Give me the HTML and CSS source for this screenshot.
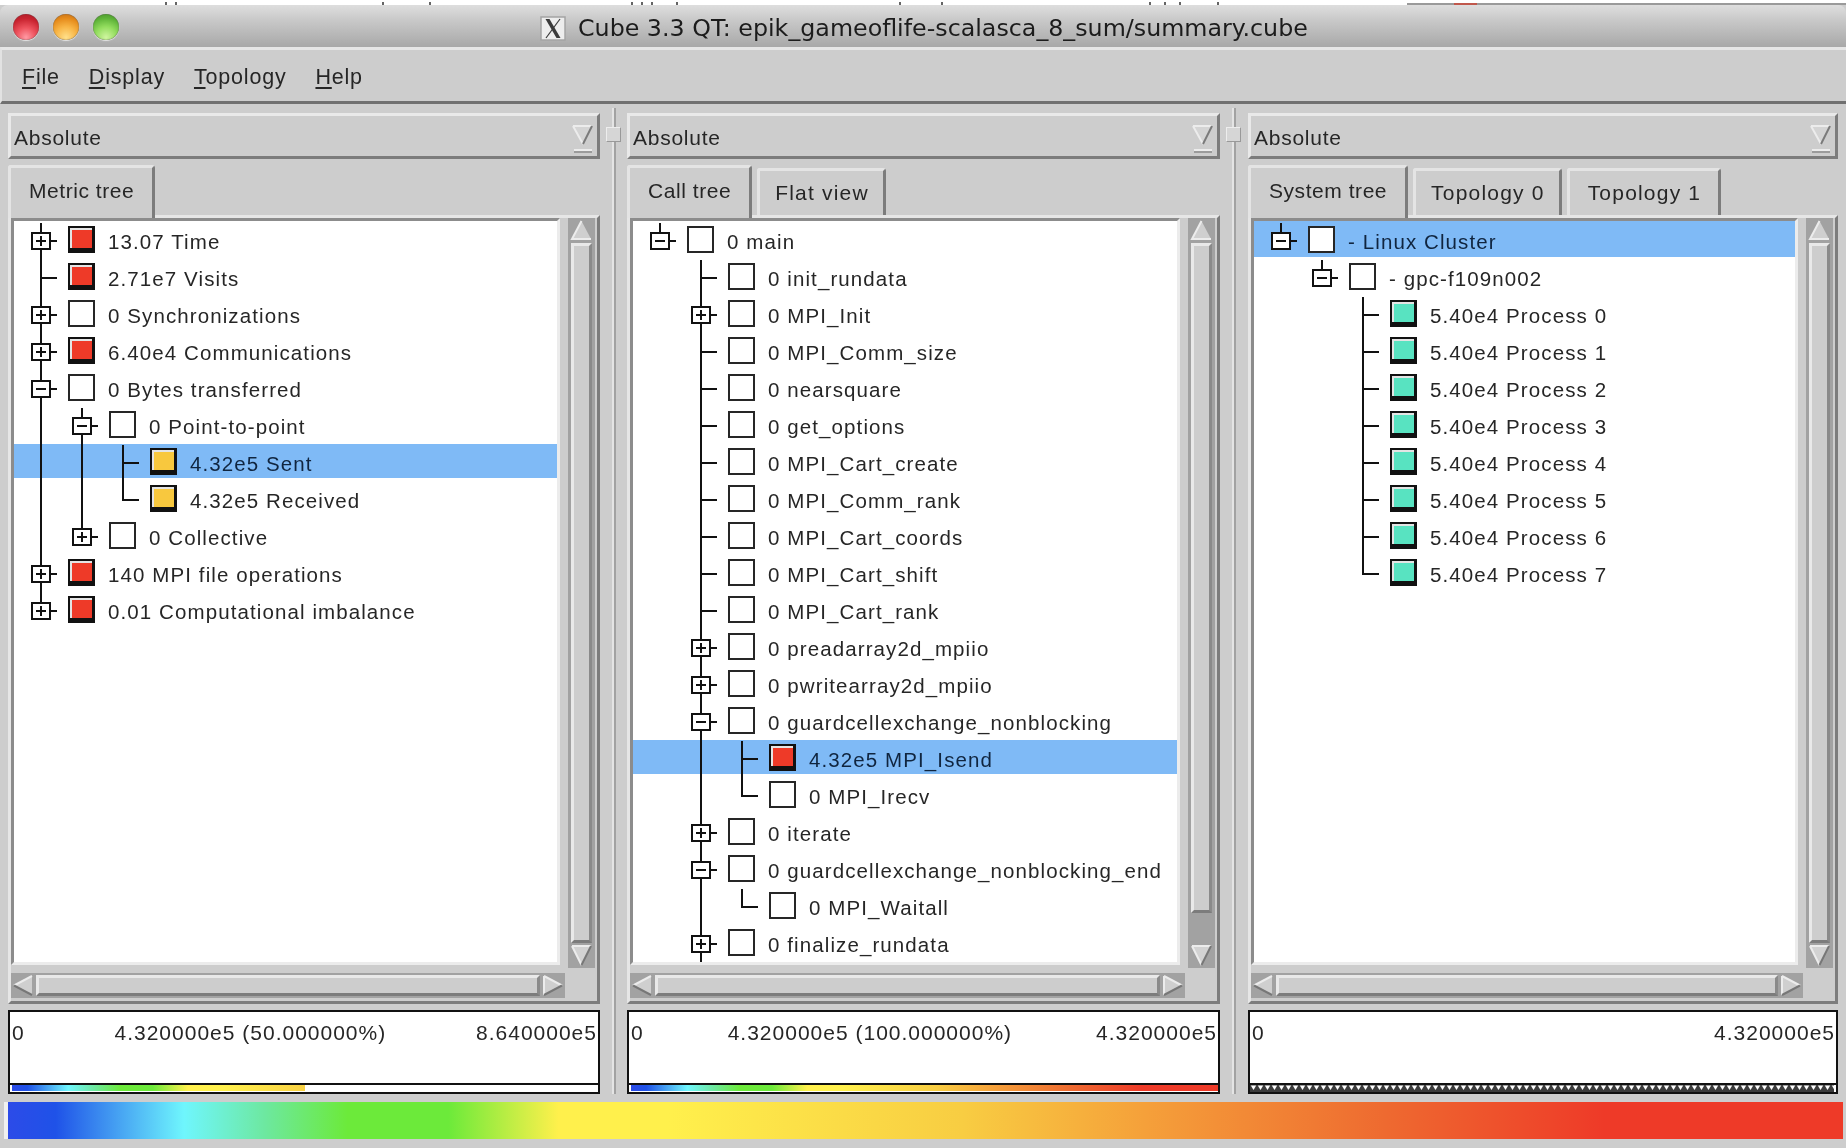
FILE: index.html
```html
<!DOCTYPE html>
<html lang="en">
<head>
<meta charset="utf-8">
<title>Cube 3.3 QT</title>
<link rel="stylesheet" href="styles.css">
</head>
<body>
<svg width="0" height="0" class="defs">
  <defs>
    <pattern id="zig" width="7" height="7" patternUnits="userSpaceOnUse">
      <rect width="7" height="7" fill="#3c3c3c"/>
      <path d="M0.8 0.5 H6.2 L3.5 5 Z" fill="#fff"/>
    </pattern>
    <symbol id="a-up" viewBox="0 0 27 25"><rect width="27" height="25" fill="#a2a2a2"/><path d="M13.5 3 L23 21 H4 Z" fill="#cfcfcf"/><path d="M13.5 3 L4 21 H23" fill="none" stroke="#ececec" stroke-width="2"/></symbol>
    <symbol id="a-down" viewBox="0 0 27 25"><rect width="27" height="25" fill="#a2a2a2"/><path d="M4 3 H23 L13.5 22 Z" fill="#d2d2d2"/><path d="M4 3 H23 M4 3 L13.5 22" fill="none" stroke="#ececec" stroke-width="2"/><path d="M23 3 L13.5 22" fill="none" stroke="#777" stroke-width="2"/></symbol>
    <symbol id="a-left" viewBox="0 0 25 25"><rect width="25" height="25" fill="#a2a2a2"/><path d="M3 12.5 L21 3 V22 Z" fill="#cfcfcf"/><path d="M3 12.5 L21 3" fill="none" stroke="#ececec" stroke-width="2"/><path d="M3 12.5 L21 22" fill="none" stroke="#777" stroke-width="2"/></symbol>
    <symbol id="a-right" viewBox="0 0 25 25"><rect width="25" height="25" fill="#a2a2a2"/><path d="M22 12.5 L4 3 V22 Z" fill="#cfcfcf"/><path d="M22 12.5 L4 3 M4 3 V22" fill="none" stroke="#ececec" stroke-width="2"/><path d="M22 12.5 L4 22" fill="none" stroke="#777" stroke-width="2"/></symbol>
    <symbol id="a-combo" viewBox="0 0 22 28"><path d="M1 1 H20 L11 19 Z" fill="#d4d4d4"/><path d="M1 1 H20 M1 1 L11 19" fill="none" stroke="#ececec" stroke-width="2"/><path d="M20 1 L11 19" fill="none" stroke="#7a7a7a" stroke-width="2"/><path d="M2 25 H20" stroke="#ececec" stroke-width="2"/><path d="M2 27 H20" stroke="#8a8a8a" stroke-width="1.5"/></symbol>
  </defs>
</svg>
<div class="window">
  <svg class="strip" width="1846" height="5" viewBox="0 0 1846 5">
    <path d="M166 2V5M176 2V5M383 2V5M430 2V5M632 2V5M642 2V5M652 2V5M677 2V5M900 2V5M942 2V5M1150 2V5M1165 2V5M1180 2V5M1218 2V5" stroke="#333" stroke-width="1.5"/>
    <rect x="1407" y="3" width="439" height="2" fill="#9a9a9a"/>
    <rect x="1454" y="3" width="23" height="2" fill="#c0584c"/>
  </svg>
  <header class="titlebar">
    <div class="lights">
      <span class="light red"></span>
      <span class="light amber"></span>
      <span class="light green"></span>
    </div>
    <div class="title">
      <svg class="xlogo" width="26" height="25" viewBox="0 0 26 25">
        <rect x="1" y="1" width="24" height="23" fill="#ededed" stroke="#a4a4a4" stroke-width="1.5"/>
        <path d="M5.5 3 H9.5 L20.5 22 H16.5 Z" fill="#3a3a3a"/>
        <path d="M20 3 L6 22" stroke="#3a3a3a" stroke-width="1.2" fill="none"/>
      </svg>
      <span>Cube 3.3 QT: epik_gameoflife-scalasca_8_sum/summary.cube</span>
    </div>
  </header>
  <nav class="menubar">
    <span><u>F</u>ile</span>
    <span><u>D</u>isplay</span>
    <span><u>T</u>opology</span>
    <span><u>H</u>elp</span>
  </nav>
  <main class="panes">
    <section class="pane pane-left">
      <div class="combo"><span>Absolute</span><svg class="combo-arrow" width="22" height="28"><use href="#a-combo"/></svg></div>
      <div class="tabs"><span class="tab active">Metric tree</span></div>
      <div class="frame">
        <div class="frame-top">
          <div class="tree">
            <div class="row"><i class="g t"><b class="box plus"></b></i><span class="sw red"></span><span class="lb">13.07 Time</span></div>
            <div class="row"><i class="g t"></i><span class="sw red"></span><span class="lb">2.71e7 Visits</span></div>
            <div class="row"><i class="g t"><b class="box plus"></b></i><span class="sw"></span><span class="lb">0 Synchronizations</span></div>
            <div class="row"><i class="g t"><b class="box plus"></b></i><span class="sw red"></span><span class="lb">6.40e4 Communications</span></div>
            <div class="row"><i class="g t"><b class="box"></b></i><span class="sw"></span><span class="lb">0 Bytes transferred</span></div>
            <div class="row"><i class="g v"></i><i class="g t"><b class="box"></b></i><span class="sw"></span><span class="lb">0 Point-to-point</span></div>
            <div class="row sel"><i class="g v"></i><i class="g v"></i><i class="g t"></i><span class="sw yellow"></span><span class="lb">4.32e5 Sent</span></div>
            <div class="row"><i class="g v"></i><i class="g v"></i><i class="g l"></i><span class="sw yellow"></span><span class="lb">4.32e5 Received</span></div>
            <div class="row"><i class="g v"></i><i class="g l"><b class="box plus"></b></i><span class="sw"></span><span class="lb">0 Collective</span></div>
            <div class="row"><i class="g t"><b class="box plus"></b></i><span class="sw red"></span><span class="lb">140 MPI file operations</span></div>
            <div class="row"><i class="g l"><b class="box plus"></b></i><span class="sw red"></span><span class="lb">0.01 Computational imbalance</span></div>
          </div>
          <div class="vscroll">
            <svg class="arrow" width="27" height="25"><use href="#a-up"/></svg>
            <div class="slider"></div>
            <svg class="arrow" width="27" height="25"><use href="#a-down"/></svg>
          </div>
        </div>
        <div class="frame-bottom">
          <div class="hscroll">
            <svg width="25" height="25"><use href="#a-left"/></svg>
            <div class="hslider"></div>
            <svg width="25" height="25"><use href="#a-right"/></svg>
          </div>
        </div>
      </div>
      <div class="legend">
        <div class="legend-text"><span>0</span><span>4.320000e5 (50.000000%)</span><span>8.640000e5</span></div>
        <div class="legend-bar"><div class="fill half"></div></div>
      </div>
    </section>
    <div class="split"><span class="grip"></span></div>
    <section class="pane pane-mid">
      <div class="combo"><span>Absolute</span><svg class="combo-arrow" width="22" height="28"><use href="#a-combo"/></svg></div>
      <div class="tabs"><span class="tab active">Call tree</span><span class="tab">Flat view</span></div>
      <div class="frame">
        <div class="frame-top">
          <div class="tree">
            <div class="row"><i class="g l"><b class="box"></b></i><span class="sw"></span><span class="lb">0 main</span></div>
            <div class="row"><i class="g"></i><i class="g t"></i><span class="sw"></span><span class="lb">0 init_rundata</span></div>
            <div class="row"><i class="g"></i><i class="g t"><b class="box plus"></b></i><span class="sw"></span><span class="lb">0 MPI_Init</span></div>
            <div class="row"><i class="g"></i><i class="g t"></i><span class="sw"></span><span class="lb">0 MPI_Comm_size</span></div>
            <div class="row"><i class="g"></i><i class="g t"></i><span class="sw"></span><span class="lb">0 nearsquare</span></div>
            <div class="row"><i class="g"></i><i class="g t"></i><span class="sw"></span><span class="lb">0 get_options</span></div>
            <div class="row"><i class="g"></i><i class="g t"></i><span class="sw"></span><span class="lb">0 MPI_Cart_create</span></div>
            <div class="row"><i class="g"></i><i class="g t"></i><span class="sw"></span><span class="lb">0 MPI_Comm_rank</span></div>
            <div class="row"><i class="g"></i><i class="g t"></i><span class="sw"></span><span class="lb">0 MPI_Cart_coords</span></div>
            <div class="row"><i class="g"></i><i class="g t"></i><span class="sw"></span><span class="lb">0 MPI_Cart_shift</span></div>
            <div class="row"><i class="g"></i><i class="g t"></i><span class="sw"></span><span class="lb">0 MPI_Cart_rank</span></div>
            <div class="row"><i class="g"></i><i class="g t"><b class="box plus"></b></i><span class="sw"></span><span class="lb">0 preadarray2d_mpiio</span></div>
            <div class="row"><i class="g"></i><i class="g t"><b class="box plus"></b></i><span class="sw"></span><span class="lb">0 pwritearray2d_mpiio</span></div>
            <div class="row"><i class="g"></i><i class="g t"><b class="box"></b></i><span class="sw"></span><span class="lb">0 guardcellexchange_nonblocking</span></div>
            <div class="row sel"><i class="g"></i><i class="g v"></i><i class="g t"></i><span class="sw red"></span><span class="lb">4.32e5 MPI_Isend</span></div>
            <div class="row"><i class="g"></i><i class="g v"></i><i class="g l"></i><span class="sw"></span><span class="lb">0 MPI_Irecv</span></div>
            <div class="row"><i class="g"></i><i class="g t"><b class="box plus"></b></i><span class="sw"></span><span class="lb">0 iterate</span></div>
            <div class="row"><i class="g"></i><i class="g t"><b class="box"></b></i><span class="sw"></span><span class="lb">0 guardcellexchange_nonblocking_end</span></div>
            <div class="row"><i class="g"></i><i class="g v"></i><i class="g l"></i><span class="sw"></span><span class="lb">0 MPI_Waitall</span></div>
            <div class="row"><i class="g"></i><i class="g t"><b class="box plus"></b></i><span class="sw"></span><span class="lb">0 finalize_rundata</span></div>
          </div>
          <div class="vscroll">
            <svg class="arrow" width="27" height="25"><use href="#a-up"/></svg>
            <div class="slider"></div>
            <div class="trough"></div>
            <svg class="arrow" width="27" height="25"><use href="#a-down"/></svg>
          </div>
        </div>
        <div class="frame-bottom">
          <div class="hscroll">
            <svg width="25" height="25"><use href="#a-left"/></svg>
            <div class="hslider"></div>
            <svg width="25" height="25"><use href="#a-right"/></svg>
          </div>
        </div>
      </div>
      <div class="legend">
        <div class="legend-text"><span>0</span><span>4.320000e5 (100.000000%)</span><span>4.320000e5</span></div>
        <div class="legend-bar"><div class="fill"></div></div>
      </div>
    </section>
    <div class="split"><span class="grip"></span></div>
    <section class="pane pane-right">
      <div class="combo"><span>Absolute</span><svg class="combo-arrow" width="22" height="28"><use href="#a-combo"/></svg></div>
      <div class="tabs"><span class="tab active">System tree</span><span class="tab">Topology 0</span><span class="tab">Topology 1</span></div>
      <div class="frame">
        <div class="frame-top">
          <div class="tree">
            <div class="row sel"><i class="g l"><b class="box"></b></i><span class="sw"></span><span class="lb">- Linux Cluster</span></div>
            <div class="row"><i class="g"></i><i class="g l"><b class="box"></b></i><span class="sw"></span><span class="lb">- gpc-f109n002</span></div>
            <div class="row"><i class="g"></i><i class="g"></i><i class="g t"></i><span class="sw teal"></span><span class="lb">5.40e4 Process 0</span></div>
            <div class="row"><i class="g"></i><i class="g"></i><i class="g t"></i><span class="sw teal"></span><span class="lb">5.40e4 Process 1</span></div>
            <div class="row"><i class="g"></i><i class="g"></i><i class="g t"></i><span class="sw teal"></span><span class="lb">5.40e4 Process 2</span></div>
            <div class="row"><i class="g"></i><i class="g"></i><i class="g t"></i><span class="sw teal"></span><span class="lb">5.40e4 Process 3</span></div>
            <div class="row"><i class="g"></i><i class="g"></i><i class="g t"></i><span class="sw teal"></span><span class="lb">5.40e4 Process 4</span></div>
            <div class="row"><i class="g"></i><i class="g"></i><i class="g t"></i><span class="sw teal"></span><span class="lb">5.40e4 Process 5</span></div>
            <div class="row"><i class="g"></i><i class="g"></i><i class="g t"></i><span class="sw teal"></span><span class="lb">5.40e4 Process 6</span></div>
            <div class="row"><i class="g"></i><i class="g"></i><i class="g l"></i><span class="sw teal"></span><span class="lb">5.40e4 Process 7</span></div>
          </div>
          <div class="vscroll">
            <svg class="arrow" width="27" height="25"><use href="#a-up"/></svg>
            <div class="slider"></div>
            <svg class="arrow" width="27" height="25"><use href="#a-down"/></svg>
          </div>
        </div>
        <div class="frame-bottom">
          <div class="hscroll">
            <svg width="25" height="25"><use href="#a-left"/></svg>
            <div class="hslider"></div>
            <svg width="25" height="25"><use href="#a-right"/></svg>
          </div>
        </div>
      </div>
      <div class="legend">
        <div class="legend-text"><span>0</span><span>4.320000e5</span></div>
        <div class="legend-bar"><svg class="zigzag" width="100%" height="100%"><rect width="100%" height="100%" fill="url(#zig)"/></svg></div>
      </div>
    </section>
  </main>
  <div class="scale"></div>
</div>
</body>
</html>
```
FILE: styles.css
```css
* { box-sizing: border-box; }
html, body { margin: 0; height: 100%; }
body {
  background: #fff;
  overflow: hidden;
  font-family: "Liberation Sans", Arial, sans-serif;
  color: #262626;
}
.defs { position: absolute; }
.window {
  width: 1846px;
  height: 1148px;
  display: flex;
  flex-direction: column;
  background: #cdcdcd;
  filter: blur(0.45px);
}
.strip { display: block; flex: none; background: #fff; }

.titlebar {
  flex: none;
  height: 42px;
  display: flex;
  align-items: center;
  position: relative;
  background: linear-gradient(#dedede, #c9c9c9 35%, #a8a8a8);
  border-radius: 8px 8px 0 0;
}
.lights { display: flex; gap: 14px; padding-left: 13px; padding-top: 2px; }
.light { display: block; width: 26px; height: 26px; border-radius: 50%; box-shadow: 0 1px 1px #e6e6e6, inset 0 0 1px #444; }
.light.red { background: radial-gradient(circle at 50% 90%, #ff9aa4 0, #ef5560 35%, #c8232f 70%, #a51a26 100%); }
.light.amber { background: radial-gradient(circle at 50% 90%, #ffe08a 0, #f8b546 40%, #e58a1a 72%, #b9681a 100%); }
.light.green { background: radial-gradient(circle at 50% 90%, #d0f5a0 0, #93dd5e 40%, #5eb338 72%, #468a2c 100%); }
.title {
  position: absolute;
  left: 540px;
  top: 9px;
  display: flex;
  align-items: center;
  gap: 12px;
  font-family: "DejaVu Sans", sans-serif;
  font-size: 23.75px;
  color: #1c1c1c;
  white-space: nowrap;
}
.xlogo { flex: none; }

.menubar {
  flex: none;
  height: 57px;
  display: flex;
  align-items: center;
  gap: 29px;
  padding: 6px 0 2px 20px;
  background: #cdcdcd;
  border-top: 3px solid #e6e6e6;
  border-left: 2px solid #e2e2e2;
  border-bottom: 3px solid #707070;
  font-size: 21.5px;
  letter-spacing: 0.8px;
}
.menubar u { text-underline-offset: 3px; text-decoration-thickness: 2px; }

.panes {
  flex: none;
  height: 990px;
  display: flex;
  padding: 0 8px;
  background: #cdcdcd;
}
.pane { flex: none; display: flex; flex-direction: column; padding-top: 9px; }
.pane-left { width: 592px; }
.pane-mid { width: 593px; }
.pane-right { width: 590px; }
.split { flex: none; width: 27px; position: relative; }
.split + .pane-right { margin-left: 1px; }
.split::before {
  content: "";
  position: absolute;
  left: 12px;
  top: 4px;
  bottom: 0;
  width: 4px;
  background: linear-gradient(90deg, #e4e4e4 0 2px, #a2a2a2 2px);
}
.grip {
  position: absolute;
  left: 6px;
  top: 23px;
  width: 15px;
  height: 15px;
  background: #d6d6d6;
  border: 1px solid #ededed;
  border-right-color: #999;
  border-bottom-color: #999;
}

.combo {
  flex: none;
  height: 46px;
  display: flex;
  align-items: center;
  justify-content: space-between;
  padding: 4px 3px 0 3px;
  border: 3px solid;
  border-color: #e9e9e9 #7c7c7c #7c7c7c #e9e9e9;
  font-size: 21px;
  letter-spacing: 0.75px;
}
.combo-arrow { flex: none; margin-top: 1px; }

.tabs { flex: none; height: 50px; margin-top: 6px; display: flex; gap: 5px; position: relative; z-index: 1; }
.tab {
  height: 47px;
  margin-top: 3px;
  padding: 10px 14px 0 15px;
  border: 3px solid #cdcdcd;
  border-top-color: #e4e4e4;
  border-left-color: #e4e4e4;
  border-right-color: #7c7c7c;
  border-bottom: 0;
  border-radius: 3px 3px 0 0;
  font-size: 21px;
  letter-spacing: 1.2px;
  white-space: nowrap;
}
.tab + .tab + .tab { padding: 10px 17px 0 18px; }
.tab.active {
  height: 53px;
  margin-top: 0;
  padding: 11px 18px 0 18px;
  background: #cdcdcd;
  letter-spacing: 0.55px;
}

.frame {
  flex: none;
  height: 789px;
  display: flex;
  flex-direction: column;
  border: 3px solid;
  border-color: #e6e6e6 #7c7c7c #7c7c7c #e6e6e6;
}
.frame-top { flex: none; height: 747px; display: flex; gap: 8px; padding-right: 2px; }
.tree {
  flex: 1;
  min-width: 0;
  overflow: hidden;
  padding: 2px 0 0 7px;
  background: #fff;
  border: 3px solid #ececec;
  border-left-color: #8c8c8c;
  border-top-color: #8c8c8c;
}
.row {
  height: 37px;
  display: flex;
  align-items: center;
  white-space: nowrap;
  margin-left: -7px;
  padding-left: 7px;
}
.row.sel {
  background: linear-gradient(#7fbaf6 33px, transparent 33px);
  box-shadow: 0 -1px 0 #7fbaf6;
  color: #10253f;
}
.tree > .row.sel:first-child {
  margin-top: -2px;
  height: 39px;
  padding-top: 2px;
  background: linear-gradient(#7fbaf6 36px, transparent 36px);
  box-shadow: none;
}

.g { flex: none; width: 41px; height: 37px; position: relative; display: block; }
.g.v::before, .g.t::before, .g.l::before {
  content: "";
  position: absolute;
  left: 19px;
  top: 0;
  bottom: 0;
  width: 2px;
  background: #111;
}
.g.l::before { bottom: 18px; }
.g.t::after, .g.l::after {
  content: "";
  position: absolute;
  left: 19px;
  top: 17px;
  width: 17px;
  height: 2px;
  background: #111;
}
.box {
  position: absolute;
  left: 10px;
  top: 9px;
  width: 20px;
  height: 18px;
  z-index: 1;
  background: #fff;
  border: 2px solid #111;
}
.box::before {
  content: "";
  position: absolute;
  left: 3px;
  top: 6px;
  width: 10px;
  height: 2px;
  background: #111;
}
.box.plus::after {
  content: "";
  position: absolute;
  left: 7px;
  top: 2px;
  width: 2px;
  height: 10px;
  background: #111;
}
.sw {
  flex: none;
  width: 27px;
  height: 27px;
  margin: 0 13px 5px 6px;
  background: #fff;
  border: 2px solid #262626;
}
.sw.red, .sw.yellow, .sw.teal {
  border-color: #111;
  border-width: 2px 3px 5px 2px;
  box-shadow: inset 2px 2px 0 #e4e4e4;
}
.sw.red { background: #ee3a28; }
.sw.yellow { background: #f8c83e; }
.sw.teal { background: #58e3c1; }
.lb { font-size: 20.5px; letter-spacing: 1.1px; }

.vscroll { flex: none; width: 27px; height: 750px; display: flex; flex-direction: column; background: #a2a2a2; }
.arrow { flex: none; display: block; }
.slider {
  flex: 1;
  margin: 0 3px;
  background: #cdcdcd;
  border: 3px solid;
  border-color: #e9e9e9 #8a8a8a #7c7c7c #e9e9e9;
}
.trough { flex: none; height: 30px; background: #a2a2a2; }

.frame-bottom { flex: none; height: 36px; padding: 8px 32px 3px 0; }
.hscroll { height: 25px; display: flex; background: #a2a2a2; }
.hscroll svg { flex: none; display: block; }
.hslider {
  flex: 1;
  margin: 2px 0;
  background: #cdcdcd;
  border: 3px solid;
  border-color: #e9e9e9 #8a8a8a #7c7c7c #e9e9e9;
}

.legend {
  flex: none;
  height: 84px;
  margin-top: 6px;
  display: flex;
  flex-direction: column;
  background: #fff;
  border: 2px solid #111;
}
.legend-text {
  flex: 1;
  display: flex;
  justify-content: space-between;
  padding: 9px 1px 0 2px;
  font-size: 21px;
  letter-spacing: 1px;
  line-height: 24px;
  white-space: nowrap;
}
.legend-bar { flex: none; height: 9px; border-top: 2px solid #111; padding-left: 2px; }
.legend-bar .fill {
  height: 6px;
  background: linear-gradient(90deg, #2c4be8 0, #1f52e8 2.6%, #6ff6fd 9.6%, #6de8a0 14%, #6cea3a 18.5%, #6cea3a 24%, #fff04c 30%, #fff04c 36%, #f8cd42 52%, #f5a03a 62%, #ee6a30 75%, #ee3a28 87%, #ee3a28 100%);
}
.legend-bar .fill.half {
  width: 50%;
  background-size: 200% 100%;
}
.zigzag { display: block; margin-left: -2px; }

.scale {
  flex: none;
  height: 37px;
  margin: 8px 3px 0 8px;
  box-shadow: -4px 0 0 #f0f0f0;
  background: linear-gradient(90deg, #2c4be8 0, #1f52e8 2.6%, #6ff6fd 9.6%, #6de8a0 14%, #6cea3a 18.5%, #6cea3a 24%, #fff04c 30%, #fff04c 36%, #f8cd42 52%, #f5a03a 62%, #ee6a30 75%, #ee3a28 87%, #ee3a28 100%);
}
```
